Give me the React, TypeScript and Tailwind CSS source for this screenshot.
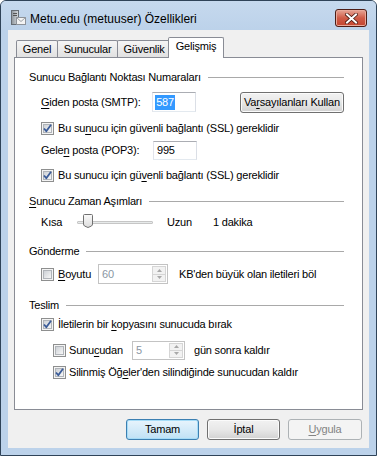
import React from "react";

const FONT = { fontFamily: '"Liberation Sans", Arial, sans-serif' };

function U({ children }: { children: React.ReactNode }) {
  return <span className="underline underline-offset-[2px] decoration-1">{children}</span>;
}

function Check({ checked }: { checked: boolean }) {
  return (
    <span className="relative w-[13px] h-[13px] border border-[#8e8f8f] bg-[#f4f4f4] flex items-center justify-center shrink-0">
      <span className="w-[9px] h-[9px] border border-[#b0b4b9] bg-gradient-to-br from-[#cdd1d6] to-[#f7f7f7]" />
      {checked && (
        <svg className="absolute left-0 top-0" width="11" height="11" viewBox="0 0 11 11">
          <path d="M2 5.5 L4.3 8.2 L9 1.8" fill="none" stroke="#3b5c99" strokeWidth="1.8" strokeLinejoin="round" />
        </svg>
      )}
    </span>
  );
}

function Header({ children, gap }: { children: React.ReactNode; gap: string }) {
  return (
    <div className={`flex items-center h-[14px] ${gap}`}>
      <span className="whitespace-nowrap">{children}</span>
      <span className="flex-1 h-px bg-[#a9a9a9] ml-[7px]" />
    </div>
  );
}

function Spin({ value, w, h }: { value: string; w: string; h: string }) {
  return (
    <div className={`${w} ${h} border border-[#c3c3c3] bg-white flex items-center justify-between pl-[3px] pr-[1px]`}>
      <span className="text-[#8a96a3]">{value}</span>
      <div className="flex flex-col h-full py-[1px] gap-0">
        <div className="flex-1 w-[14px] border border-[#d5d5d5] bg-[#f2f2f2] flex items-center justify-center">
          <svg width="5" height="3" viewBox="0 0 5 3"><path d="M0 3 L2.5 0 L5 3 Z" fill="#a8a8a8" /></svg>
        </div>
        <div className="flex-1 w-[14px] border border-t-0 border-[#d5d5d5] bg-[#f2f2f2] flex items-center justify-center">
          <svg width="5" height="3" viewBox="0 0 5 3"><path d="M0 0 L2.5 3 L5 0 Z" fill="#a8a8a8" /></svg>
        </div>
      </div>
    </div>
  );
}

function TitleIcon() {
  return (
    <svg width="16" height="16" viewBox="0 0 16 16">
      <defs>
        <linearGradient id="tw" x1="0" x2="1" y1="0" y2="0">
          <stop offset="0" stopColor="#8e959c" />
          <stop offset="1" stopColor="#d6dadd" />
        </linearGradient>
      </defs>
      <rect x="1.5" y="0.5" width="7" height="14" fill="url(#tw)" stroke="#666d74" />
      <rect x="3" y="3" width="4" height="1" fill="#555" />
      <rect x="3" y="5" width="4" height="1" fill="#555" />
      <rect x="6.5" y="7.5" width="9" height="7" fill="#f3f3f3" stroke="#8d9299" />
      <path d="M6.5 7.5 L11 11.5 L15.5 7.5" fill="none" stroke="#9aa0a6" />
    </svg>
  );
}

function Btn({ children, kind }: { children: React.ReactNode; kind: "default" | "normal" | "disabled" }) {
  const base = "h-[21px] rounded-[3px] flex items-center justify-center border";
  if (kind === "default")
    return (
      <div className={`${base} w-[73px] border-[#3c7fb1] bg-gradient-to-b from-[#e8f4fc] via-[#d4ebf9] to-[#bfe1f5] shadow-[inset_0_0_0_1px_#a6dcf7]`}>
        {children}
      </div>
    );
  if (kind === "disabled")
    return <div className={`${base} w-[74px] border-[#adb2b5] bg-[#f4f4f4] text-[#838383]`}>{children}</div>;
  return (
    <div className={`${base} w-[73px] border-[#707070] bg-gradient-to-b from-[#f2f2f2] via-[#e8e8e8] to-[#d2d2d2] shadow-[inset_0_0_0_1px_#fbfbfb]`}>
      {children}
    </div>
  );
}

export default function App() {
  return (
    <div
      style={FONT}
      className="w-[377px] h-[456px] bg-[#bcd2ea] border border-[#2f4358] rounded-t-[6px] flex flex-col text-[11px] tracking-[-0.2px] text-black overflow-hidden"
    >
      {/* title bar */}
      <div className="h-[29px] flex items-start bg-gradient-to-b from-[#c6d9ee] to-[#bcd2ea]">
        <div className="mt-[9px] ml-[9px]">
          <TitleIcon />
        </div>
        <span className="ml-[4px] mt-[11px] text-[12px] tracking-normal leading-[14px]">Metu.edu (metuuser) Özellikleri</span>
        <div className="ml-auto mr-[9px] mt-[8px] w-[32px] h-[18px] rounded-[3px] border border-[#4d1d16] bg-gradient-to-b from-[#e6a597] via-[#cf5b47] to-[#c4452f] shadow-[inset_0_0_0_1px_#e9a99a] flex items-center justify-center">
          <svg width="13" height="11" viewBox="0 0 13 11">
            <path d="M2 1.5 L11 9.5 M11 1.5 L2 9.5" stroke="#4a1a12" strokeWidth="3.6" strokeLinecap="square" />
            <path d="M2 1.5 L11 9.5 M11 1.5 L2 9.5" stroke="#ffffff" strokeWidth="2" strokeLinecap="square" />
          </svg>
        </div>
      </div>

      {/* client */}
      <div className="flex-1 mx-[7px] mb-[7px] bg-[#f0f0f0] flex flex-col">
        {/* tabs */}
        <div className="mt-[7px] h-[20px] ml-[8px] flex items-end relative z-10">
          <div className="w-[42px] h-[17px] border border-b-0 border-[#898c95] rounded-t-[2px] bg-gradient-to-b from-[#f5f5f5] to-[#e1e1e1] flex items-center justify-center">
            Genel
          </div>
          <div className="w-[61px] h-[17px] -ml-px border border-b-0 border-[#898c95] rounded-t-[2px] bg-gradient-to-b from-[#f5f5f5] to-[#e1e1e1] flex items-center justify-center">
            Sunucular
          </div>
          <div className="w-[54px] h-[17px] -ml-px border border-b-0 border-[#898c95] rounded-t-[2px] bg-gradient-to-b from-[#f5f5f5] to-[#e1e1e1] flex items-center justify-center">
            Güvenlik
          </div>
          <div className="w-[56px] h-[21px] -ml-[3px] -mb-px border border-b-0 border-[#898c95] rounded-t-[2px] bg-white flex items-center justify-center pb-[3px]">
            Gelişmiş
          </div>
        </div>

        {/* panel */}
        <div className="mx-[6px] h-[353px] border border-[#898c95] bg-white pl-[14px] pr-[18px] pt-[12px] flex flex-col">
          <Header gap="">Sunucu Bağlantı Noktası Numaraları</Header>

          <div className="mt-[8px] ml-[12px] h-[20px] flex items-center">
            <span className="w-[112px]">
              <U>G</U>iden posta (SMTP):
            </span>
            <div className="w-[44px] h-[20px] border border-[#abadb3] border-l-[#e2e3ea] border-r-[#dbdfe6] border-b-[#e3e9ef] bg-white flex items-center pl-[2px]">
              <span className="bg-[#3399ff] text-white h-[15px] leading-[15px] px-[1px]">587</span>
            </div>
            <div className="ml-[44px] w-[105px] h-[21px] rounded-[3px] border border-[#707070] bg-gradient-to-b from-[#f2f2f2] via-[#e8e8e8] to-[#d2d2d2] shadow-[inset_0_0_0_1px_#fbfbfb] flex items-center justify-center">
              <span>
                Va<U>r</U>sayılanları Kullan
              </span>
            </div>
          </div>

          <div className="mt-[8px] ml-[12px] h-[16px] flex items-center gap-[4px]">
            <Check checked />
            <span>
              Bu su<U>n</U>ucu için güvenli bağlantı (SSL) gereklidir
            </span>
          </div>

          <div className="mt-[4px] ml-[12px] h-[20px] flex items-center">
            <span className="w-[112px]">
              Gele<U>n</U> posta (POP3):
            </span>
            <div className="w-[44px] h-[19px] border border-[#abadb3] border-l-[#e2e3ea] border-r-[#dbdfe6] border-b-[#e3e9ef] bg-white flex items-center pl-[3px]">
              995
            </div>
          </div>

          <div className="mt-[7px] ml-[12px] h-[16px] flex items-center gap-[4px]">
            <Check checked />
            <span>
              Bu sunucu için gü<U>v</U>enli bağlantı (SSL) gereklidir
            </span>
          </div>

          <div className="mt-[11px]">
            <Header gap="">
              <U>S</U>unucu Zaman Aşımları
            </Header>
          </div>

          <div className="mt-[4px] ml-[12px] h-[20px] flex items-center">
            <span className="w-[36px]">Kısa</span>
            <div className="relative w-[76px] h-[20px] flex items-center">
              <div className="w-full h-[3px] border border-[#c6c6c6] bg-[#e7eaea] rounded-[1px]" />
              <svg className="absolute left-[6px] top-[2px]" width="10" height="14" viewBox="0 0 10 14">
                <defs>
                  <linearGradient id="th" x1="0" x2="0" y1="0" y2="1">
                    <stop offset="0" stopColor="#fafafa" />
                    <stop offset="1" stopColor="#dcdcdc" />
                  </linearGradient>
                </defs>
                <path d="M0.5 1.5 Q0.5 0.5 1.5 0.5 H8.5 Q9.5 0.5 9.5 1.5 V10 Q9.5 11 8.5 12 L5 13.5 L1.5 12 Q0.5 11 0.5 10 Z" fill="url(#th)" stroke="#707070" />
              </svg>
            </div>
            <span className="ml-[14px] w-[46px]">Uzun</span>
            <span>1 dakika</span>
          </div>

          <div className="mt-[12px]">
            <Header gap="">Gönderme</Header>
          </div>

          <div className="mt-[6px] ml-[12px] h-[20px] flex items-center">
            <Check checked={false} />
            <span className="ml-[4px] w-[40px]">
              <U>B</U>oyutu
            </span>
            <Spin value="60" w="w-[70px]" h="h-[20px]" />
            <span className="ml-[11px]">KB'den büyük olan iletileri böl</span>
          </div>

          <div className="mt-[14px]">
            <Header gap="">Teslim</Header>
          </div>

          <div className="mt-[4px] ml-[12px] h-[16px] flex items-center gap-[4px]">
            <Check checked />
            <span>
              İletilerin bir <U>k</U>opyasını sunucuda bırak
            </span>
          </div>

          <div className="mt-[8px] ml-[24px] h-[20px] flex items-center">
            <Check checked={false} />
            <span className="ml-[3px] w-[63px]">
              Sunu<U>c</U>udan
            </span>
            <Spin value="5" w="w-[53px]" h="h-[19px]" />
            <span className="ml-[9px]">gün sonra kaldır</span>
          </div>

          <div className="mt-[4px] ml-[24px] h-[16px] flex items-center gap-[3px]">
            <Check checked />
            <span>
              Silinmiş Öğ<U>e</U>ler'den silindiğinde sunucudan kaldır
            </span>
          </div>
        </div>

        {/* buttons */}
        <div className="mt-[9px] mr-[7px] flex justify-end gap-[8px]">
          <Btn kind="default">Tamam</Btn>
          <Btn kind="normal">İptal</Btn>
          <Btn kind="disabled">
            <span>
              <U>U</U>ygula
            </span>
          </Btn>
        </div>
      </div>
    </div>
  );
}
